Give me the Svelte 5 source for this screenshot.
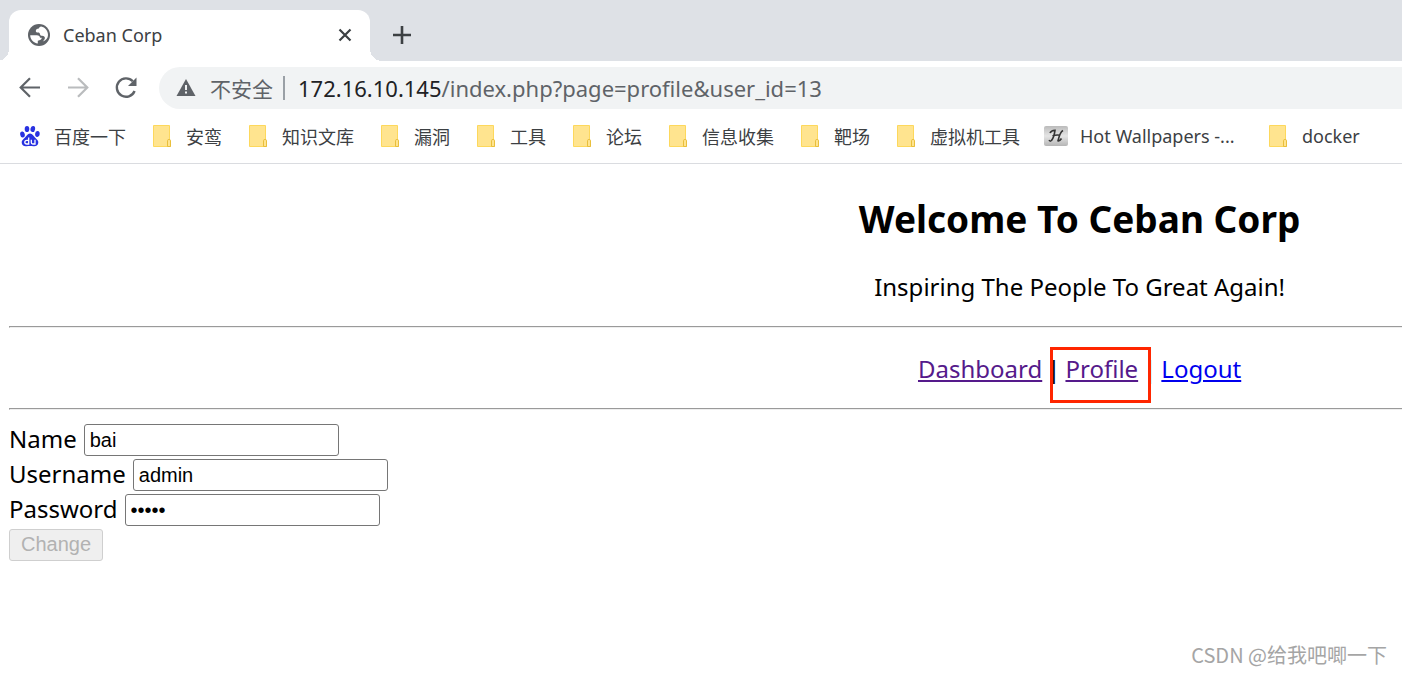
<script>
  const bookmarks = [
    { label: '百度一下', icon: 'baidu' },
    { label: '安鸾', icon: 'folder' },
    { label: '知识文库', icon: 'folder' },
    { label: '漏洞', icon: 'folder' },
    { label: '工具', icon: 'folder' },
    { label: '论坛', icon: 'folder' },
    { label: '信息收集', icon: 'folder' },
    { label: '靶场', icon: 'folder' },
    { label: '虚拟机工具', icon: 'folder' },
    { label: 'Hot Wallpapers -...', icon: 'letter' },
    { label: 'docker', icon: 'folder' }
  ];

  let name = $state('bai');
  let username = $state('admin');
  let password = $state('admin');
</script>

<div class="browser">
  <header class="chrome">
    <div class="tabs">
      <div class="tab">
        <svg class="globe" viewBox="0 0 22 22" aria-hidden="true">
          <circle cx="11" cy="11" r="11" fill="#5f6368" />
          <path d="M2.200 11.300h6.600c2.200 0 3.200.9 3.200 2.500h1.800c-.2 1.700-1.600 2.700-4 2.900v2.900C5.600 19 2.200 15.600 2.200 11.300z" fill="#fff" />
          <path d="M13.200 2.500c-1.400.3-2 1-2.400 2-1.900.3-3 1.200-3 2.400 0 1.200 1 1.600 2.200 1.600 1.400 0 1.800.6 2 1.700.2 1 1 1.600 2.100 1.600 1.500 0 2.600.7 2.800 2 .1 1.100-.7 2.300-2.200 3.700 3.300-.9 5.300-3.300 5.300-6.500 0-4.300-2.800-7.600-6.800-8.500z" fill="#fff" />
        </svg>
        <span class="title">Ceban Corp</span>
        <button class="icon-button" aria-label="Close tab">
          <svg width="14" height="14" viewBox="0 0 14 14"><path d="M1.500 1.500l11 11M12.500 1.500l-11 11" stroke="#3c4043" stroke-width="2.200" /></svg>
        </button>
      </div>
      <button class="icon-button new-tab" aria-label="New tab">
        <svg width="18" height="18" viewBox="0 0 18 18"><path d="M9 0v18M0 9h18" stroke="#3c4043" stroke-width="2.600" /></svg>
      </button>
    </div>

    <div class="toolbar">
      <button class="icon-button" aria-label="Back">
        <svg width="24" height="24" viewBox="0 0 24 24" fill="none" stroke="#5f6368" stroke-width="2.200"><path d="M22 11.500H3.500M12 2.200L2.700 11.500l9.300 9.300" /></svg>
      </button>
      <button class="icon-button" aria-label="Forward" disabled>
        <svg width="24" height="24" viewBox="0 0 24 24" fill="none" stroke="#babcbe" stroke-width="2.200"><path d="M2 11.500h18.500M12 2.200l9.300 9.300-9.300 9.300" /></svg>
      </button>
      <button class="icon-button" aria-label="Reload">
        <svg width="24" height="24" viewBox="0 0 24 24"><path d="M20.600 15A9.200 9.200 0 1 1 18.800 5.300" fill="none" stroke="#5f6368" stroke-width="2.400" /><path d="M22.500 1.500V10H14z" fill="#5f6368" /></svg>
      </button>
      <div class="address">
        <svg width="20" height="18" viewBox="0 0 20 18" aria-hidden="true"><path d="M10 0l9.500 17H.5z" fill="#5f6368" /><path d="M9 6h2v5H9zM9 12.500h2v2H9z" fill="#f1f3f4" /></svg>
        <span class="insecure">不安全</span>
        <span class="divider"></span>
        <span class="url"><b>172.16.10.145</b>/index.php?page=profile&amp;user_id=13</span>
      </div>
    </div>

    <nav class="bookmarks" aria-label="Bookmarks">
      {#each bookmarks as item}
        <a href="#{item.label}">
          {#if item.icon === 'folder'}
            <svg width="24" height="24" viewBox="0 0 24 24" aria-hidden="true">
              <path d="M3.500 1.500h16V16l1 1v5.500h-17z" fill="#ffe48f" stroke="#fdd85c" />
              <path d="M17.500 22v-5.500q0-1 1.500-1t1.500 1v6h-3z" fill="#ffe48f" stroke="#e9bf3c" />
            </svg>
          {:else if item.icon === 'baidu'}
            <svg width="24" height="24" viewBox="0 0 24 24" aria-hidden="true">
              <g fill="#2932e1">
                <ellipse cx="4.500" cy="10.500" rx="2.300" ry="3" transform="rotate(-12 4.500 10.500)" />
                <ellipse cx="9" cy="5" rx="2.300" ry="3.100" />
                <ellipse cx="14.800" cy="5" rx="2.300" ry="3.100" transform="rotate(10 14.800 5)" />
                <ellipse cx="19.400" cy="10" rx="2.300" ry="3" transform="rotate(5 19.400 10)" />
                <path d="M12 9.500c2.500 0 3.500 2.500 5 4s3.700 3 3.300 5.600c-.5 2.700-2.700 3.400-4.800 3.100-2.500-.4-4.500-.4-7 0-2.100.3-4.300-.4-4.800-3.100-.4-2.600 1.700-4.100 3.300-5.600s2.500-4 5-4z" />
              </g>
              <path d="M10.700 13.500v6.500H8.800q-2 0-2-1.800t2-1.900h1.900M13.300 15.800v2.700q0 1.500 1.500 1.500h2.200v-4.200" fill="none" stroke="#fff" stroke-width="1.300" />
            </svg>
          {:else}
            <svg width="24" height="24" viewBox="0 0 24 24" aria-hidden="true">
              <defs><linearGradient id="plate" x2="0" y2="1"><stop stop-color="#bbb" /><stop offset=".5" stop-color="#e5e5e5" /><stop offset="1" stop-color="#b5b5b5" /></linearGradient></defs>
              <rect y="2" width="24" height="20" rx="2" fill="url(#plate)" />
              <path d="M6 9q1-2.500 5-2.700-1 7-3.500 10.200-1.500 1.300-2.500-.3M19 6.500q-3 1.500-5 10.300 1.500.7 3.500-2.300M8.500 12q3.500-1.500 7.500-.8" fill="none" stroke="#333" stroke-width="1.600" />
            </svg>
          {/if}
          <span class:wide={item.icon === 'letter'}>{item.label}</span>
        </a>
      {/each}
    </nav>
  </header>

  <main>
    <div class="banner">
      <h2>Welcome To Ceban Corp</h2>
      <p>Inspiring The People To Great Again!</p>
    </div>
    <hr />
    <nav class="links" aria-label="Site">
      <a class="visited" href="#dashboard">Dashboard</a>
      <span>|</span>
      <span class="marked"><a class="visited" href="#profile">Profile</a></span>
      <span>|</span>
      <a href="#logout">Logout</a>
    </nav>
    <hr />
    <form onsubmit={(event) => event.preventDefault()}>
      <div class="row"><label for="name">Name</label><input id="name" type="text" bind:value={name} /></div>
      <div class="row"><label for="username">Username</label><input id="username" type="text" bind:value={username} /></div>
      <div class="row"><label for="password">Password</label><input id="password" type="password" bind:value={password} /></div>
      <div class="row"><button class="change" disabled>Change</button></div>
    </form>
  </main>

  <footer>CSDN @给我吧唧一下</footer>
</div>

<style>
  :global(body) {
    margin: 0;
    background: #fff;
  }

  .browser {
    display: flex;
    flex-direction: column;
    min-height: 100vh;
    overflow: hidden;
    color: #000;
    font-family: 'Noto Sans', 'Noto Sans CJK SC', sans-serif;
    font-size: 24px;
  }

  svg {
    display: block;
    flex: none;
  }

  .icon-button {
    display: grid;
    place-items: center;
    flex: none;
    padding: 0;
    border: 0;
    background: none;
  }

  .tabs {
    display: flex;
    align-items: flex-end;
    height: 61px;
    padding-left: 9px;
    background: #dee1e6;
  }

  .tab {
    position: relative;
    display: flex;
    align-items: center;
    box-sizing: border-box;
    width: 361px;
    height: 51px;
    padding: 0 18px 2px 19px;
    border-radius: 12px 12px 0 0;
    background: #fff;
    color: #3c4043;
    font-size: 18px;
  }

  .tab::before,
  .tab::after {
    position: absolute;
    bottom: 0;
    width: 12px;
    height: 12px;
    content: '';
  }

  .tab::before {
    right: 100%;
    background: radial-gradient(circle at 0 0, transparent 12px, #fff 12px);
  }

  .tab::after {
    left: 100%;
    background: radial-gradient(circle at 100% 0, transparent 12px, #fff 12px);
  }

  .globe {
    width: 22px;
    height: 22px;
  }

  .title {
    flex: 1;
    padding-left: 13px;
  }

  .new-tab {
    height: 51px;
    margin-left: 23px;
    padding-bottom: 2px;
  }

  .toolbar {
    display: flex;
    align-items: center;
    gap: 24px;
    height: 54px;
    padding-left: 18px;
  }

  .address {
    display: flex;
    flex: 1;
    align-items: center;
    height: 42px;
    margin-left: -3px;
    padding-left: 17px;
    border-radius: 21px 0 0 21px;
    background: #f1f3f4;
    color: #5f6368;
    font-size: 21px;
    white-space: nowrap;
  }

  .insecure {
    margin: 0 10px 0 14px;
  }

  .divider {
    width: 2px;
    height: 24px;
    margin-right: 13px;
    background: #9aa0a6;
  }

  .url {
    font-size: 22px;
  }

  .url b {
    color: #202124;
    font-weight: 400;
  }

  .bookmarks {
    display: flex;
    gap: 24px;
    height: 48px;
    padding-left: 18px;
    border-bottom: 1px solid #dadce0;
    font-size: 18px;
    white-space: nowrap;
  }

  .bookmarks a {
    display: flex;
    align-items: center;
    gap: 12px;
    height: 42px;
    color: #3c4043;
    text-decoration: none;
  }

  .bookmarks .wide {
    min-width: 162px;
  }

  main {
    padding: 30px 0 0 9px;
  }

  .banner,
  .links {
    padding-right: 4px;
    padding-left: 54%;
    text-align: center;
  }

  h2 {
    margin: 0;
    font-size: 37px;
    line-height: 50px;
  }

  p {
    margin: 26px 0 22px;
    line-height: 34px;
  }

  hr {
    margin: 0;
    border: 1px inset #eee;
    border-right: 0;
  }

  .links {
    display: flex;
    justify-content: center;
    gap: 5px;
    padding-top: 24px;
    padding-bottom: 22px;
    line-height: 34px;
  }

  .links a {
    color: #0000ee;
  }

  .links .visited {
    color: #551a8b;
  }

  .marked {
    position: relative;
  }

  .marked::after {
    position: absolute;
    inset: -5px -13px -17px -15px;
    border: 3px solid #ff2600;
    content: '';
    pointer-events: none;
  }

  form {
    display: grid;
    gap: 1px;
    padding-top: 13px;
  }

  .row {
    display: flex;
    align-items: center;
    gap: 7px;
    height: 34px;
  }

  label {
    padding-bottom: 3px;
    line-height: 30px;
  }

  input,
  .change {
    box-sizing: border-box;
    height: 32px;
    border-radius: 3px;
    font-family: 'Liberation Sans', Arial, sans-serif;
    font-size: 20px;
  }

  input {
    width: 255px;
    padding: 1px 5px;
    border: 1px solid #767676;
    background: #fff;
    color: #000;
  }

  .change {
    width: 94px;
    padding: 0 0 2px;
    border: 1px solid #cfcfcf;
    background: #efefef;
    color: #b2b2b2;
  }

  footer {
    margin-top: auto;
    padding: 0 15px 4px 0;
    color: #a5a5a5;
    font-family: 'Noto Sans CJK SC', sans-serif;
    font-size: 20px;
    line-height: 30px;
    text-align: right;
  }
</style>
